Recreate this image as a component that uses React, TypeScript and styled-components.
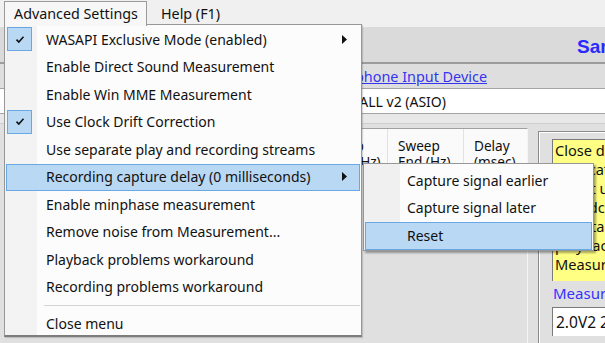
import React from "react";
import styled, { createGlobalStyle } from "styled-components";

const Global = createGlobalStyle`
  html, body { margin: 0; padding: 0; background: #dcdcdc; overflow: hidden; }
  body { font-family: "Noto Sans", "Segoe UI", sans-serif; }
`;

const FONT = `"Noto Sans", "Segoe UI", sans-serif`;

const Page = styled.div`
  position: relative;
  width: 605px;
  height: 343px;
  overflow: hidden;
  background: #dcdcdc;
  font-family: ${FONT};
  font-size: 14px;
  color: #111;
`;

const MenuBar = styled.div`
  height: 27px;
  background: #f0f0f0;
  display: flex;
  align-items: flex-start;
  padding-left: 4px;
`;

const MenuTitle = styled.div<{ $active?: boolean }>`
  position: relative;
  z-index: ${(p) => (p.$active ? 5 : 1)};
  box-sizing: border-box;
  margin-top: 1px;
  height: ${(p) => (p.$active ? "25px" : "24px")};
  padding: 0 ${(p) => (p.$active ? "9px" : "6px")} 1px;
  display: flex;
  align-items: center;
  border: 1px solid ${(p) => (p.$active ? "#9a9a9a" : "transparent")};
  border-bottom: none;
  background: ${(p) => (p.$active ? "#f7f7f7" : "transparent")};
  ${(p) => (p.$active ? "width: 143px;" : "margin-left: 7px;")}
  white-space: nowrap;
  font-size: 14.3px;
`;

const HeaderStrip = styled.div`
  height: 35px;
  background: #dadada;
  border-bottom: 2px solid #9c9c9c;
  display: flex;
  align-items: center;
  padding-left: 577px;
  white-space: nowrap;
`;

const Title = styled.div`
  font-family: "Liberation Sans", Arial, sans-serif;
  font-weight: bold;
  font-size: 19px;
  color: #2a2aff;
  margin-top: 5px;
`;

const LinkRow = styled.div`
  height: 24px;
  background: #dedede;
  border-bottom: 1px solid #a4a4a4;
  display: flex;
  align-items: center;
`;

const LinkBox = styled.div`
  width: 487px;
  text-align: right;
  white-space: nowrap;
`;

const DeviceLink = styled.span`
  color: #3535f0;
  text-decoration: underline;
  font-size: 14.4px;
`;

const DeviceBox = styled.div`
  height: 24px;
  background: #ffffff;
  border-bottom: 1px solid #a4a4a4;
  display: flex;
  align-items: center;
  white-space: nowrap;
`;

const DeviceText = styled.div`
  width: 446px;
  text-align: right;
  font-size: 14px;
`;

const SubStrip = styled.div`
  height: 9px;
  background: #e8e8e8;
  border-bottom: 1px solid #cfcfcf;
`;

const Content = styled.div`
  display: flex;
  align-items: flex-start;
  background: #e0e0e0;
  height: 220px;
  padding-left: 4px;
`;

const Table = styled.div`
  margin-top: 4px;
  width: 524px;
  height: 230px;
  border-top: 1px solid #a0a0a0;
  border-right: 1px solid #f4f4f4;
  box-sizing: border-box;
`;

const HeaderRow = styled.div`
  display: grid;
  grid-template-columns: 56px 140px 60px 52px 76px 76px 63px;
  height: 36px;
  background: #fafafa;
`;

const HeadCell = styled.div`
  box-sizing: border-box;
  border-right: 1px solid #e2e2e2;
  padding: 9px 0 0 10px;
  font-size: 13.6px;
  line-height: 15.5px;
  color: #111;
  white-space: nowrap;
  overflow: hidden;
  &:last-child { border-right: none; }
`;

const Panel = styled.div`
  margin-left: 10px;
  margin-top: 7px;
  flex: 1;
  height: 240px;
  border-left: 1px solid #8a8a8a;
  border-top: 1px solid #8a8a8a;
  box-shadow: inset 1px 1px 0 #ffffff;
  padding: 7px 0 0 13px;
  display: flex;
  flex-direction: column;
  white-space: nowrap;
  overflow: hidden;
`;

const Notice = styled.div`
  box-sizing: border-box;
  height: 142px;
  background: #ffff84;
  border-left: 1px solid #7a7a7a;
  border-top: 1px solid #7a7a7a;
  padding: 1px 0 0 2px;
  font-size: 14.6px;
  line-height: 19px;
  color: #111;
`;

const BlueLabel = styled.div`
  margin-top: 2px;
  color: #3333ff;
  font-size: 15px;
  line-height: 20px;
  padding-left: 1px;
`;

const ValueBox = styled.div`
  box-sizing: border-box;
  margin-top: 4px;
  height: 29px;
  background: #fff;
  border-left: 1px solid #7a7a7a;
  border-top: 1px solid #7a7a7a;
  display: flex;
  align-items: center;
  padding-left: 3px;
  font-size: 15.5px;
`;

/* ---------- menus ---------- */

const DropMenu = styled.div`
  position: absolute;
  z-index: 4;
  left: 4px;
  top: 24px;
  width: 358px;
  height: 313px;
  box-sizing: border-box;
  border: 1px solid #979797;
  border-bottom: 2px solid #7c7c7c;
  background: linear-gradient(to right, #f3f3f3 0, #f3f3f3 32px, #fcfcfc 32px);
  padding: 1px 1px 0 1px;
  box-shadow: 1px 1px 1px rgba(0, 0, 0, 0.15);
`;

const SubMenu = styled.div`
  position: absolute;
  z-index: 6;
  left: 363px;
  top: 163px;
  width: 231px;
  height: 88px;
  box-sizing: border-box;
  border: 1px solid #979797;
  background: linear-gradient(to right, #f0f0f0 0, #f0f0f0 36px, #fcfcfc 36px);
  padding: 3px 1px 0 1px;
  box-shadow: 2px 2px 2px rgba(0, 0, 0, 0.35);
`;

const Item = styled.div<{ $hot?: boolean; $indent?: number }>`
  position: relative;
  box-sizing: border-box;
  height: 27.5px;
  display: flex;
  align-items: center;
  padding-left: ${(p) => p.$indent ?? 39}px;
  padding-bottom: 1px;
  border: 1px solid ${(p) => (p.$hot ? "#6aa8e4" : "transparent")};
  background: ${(p) => (p.$hot ? "#b9d8f4" : "transparent")};
  white-space: nowrap;
  color: #111;
`;

const CheckBox = styled.div`
  position: absolute;
  left: 0px;
  top: 0px;
  width: 25px;
  height: 24px;
  box-sizing: border-box;
  border: 1px solid #6aa8e4;
  background: #b9d8f4;
  display: flex;
  align-items: center;
  justify-content: center;
`;

const Arrow = styled.svg`
  position: absolute;
  right: 12px;
  top: 50%;
  margin-top: -5px;
`;

const Separator = styled.div`
  height: 9px;
  margin-left: 38px;
  display: flex;
  align-items: center;
  &::after {
    content: "";
    flex: 1;
    height: 1px;
    background: #d4d4d4;
  }
`;

const Check = () => (
  <svg width="10" height="9" viewBox="0 0 10 9">
    <path d="M1.5 4.6 L3.8 7 L8.5 1.8" fill="none" stroke="#111" strokeWidth="1.6" />
  </svg>
);

const SubArrow = () => (
  <Arrow width="5" height="9" viewBox="0 0 5 9">
    <path d="M0 0 L5 4.5 L0 9 Z" fill="#111" />
  </Arrow>
);

type Entry = { label: string; checked?: boolean; sub?: boolean; hot?: boolean };

const entries: Entry[] = [
  { label: "WASAPI Exclusive Mode (enabled)", checked: true, sub: true },
  { label: "Enable Direct Sound Measurement" },
  { label: "Enable Win MME Measurement" },
  { label: "Use Clock Drift Correction", checked: true },
  { label: "Use separate play and recording streams" },
  { label: "Recording capture delay (0 milliseconds)", sub: true, hot: true },
  { label: "Enable minphase measurement" },
  { label: "Remove noise from Measurement..." },
  { label: "Playback problems workaround" },
  { label: "Recording problems workaround" },
];

const headers = [
  ["Test", ""],
  ["Signal", "Type"],
  ["Level", "(dB)"],
  ["Ch", ""],
  ["Sweep", "Start (Hz)"],
  ["Sweep", "End (Hz)"],
  ["Delay", "(msec)"],
];

export default function App() {
  return (
    <Page>
      <Global />
      <MenuBar>
        <MenuTitle $active>Advanced Settings</MenuTitle>
        <MenuTitle>Help (F1)</MenuTitle>
      </MenuBar>
      <HeaderStrip>
        <Title>Sample Rate</Title>
      </HeaderStrip>
      <LinkRow>
        <LinkBox>
          <DeviceLink>Select Microphone Input Device</DeviceLink>
        </LinkBox>
      </LinkRow>
      <DeviceBox>
        <DeviceText>Focusrite USB ASIO - UMIK CALL v2 (ASIO)</DeviceText>
      </DeviceBox>
      <SubStrip />
      <Content>
        <Table>
          <HeaderRow>
            {headers.map((h, i) => (
              <HeadCell key={i}>
                {h[0]}
                <br />
                {h[1]}
              </HeadCell>
            ))}
          </HeaderRow>
        </Table>
        <Panel>
          <Notice>
            Close down all
            <br />
            applications that
            <br />
            might use the
            <br />
            soundcard before
            <br />
            you start the
            <br />
            playback of the
            <br />
            Measurement
          </Notice>
          <BlueLabel>Measurement Level</BlueLabel>
          <ValueBox>2.0V2 2ch</ValueBox>
        </Panel>
      </Content>

      <DropMenu>
        {entries.map((e) => (
          <Item key={e.label} $hot={e.hot}>
            {e.checked && (
              <CheckBox>
                <Check />
              </CheckBox>
            )}
            {e.label}
            {e.sub && <SubArrow />}
          </Item>
        ))}
        <Separator />
        <Item>Close menu</Item>
      </DropMenu>

      <SubMenu>
        <Item $indent={41}>Capture signal earlier</Item>
        <Item $indent={41}>Capture signal later</Item>
        <Item $indent={41} $hot>
          Reset
        </Item>
      </SubMenu>
    </Page>
  );
}
